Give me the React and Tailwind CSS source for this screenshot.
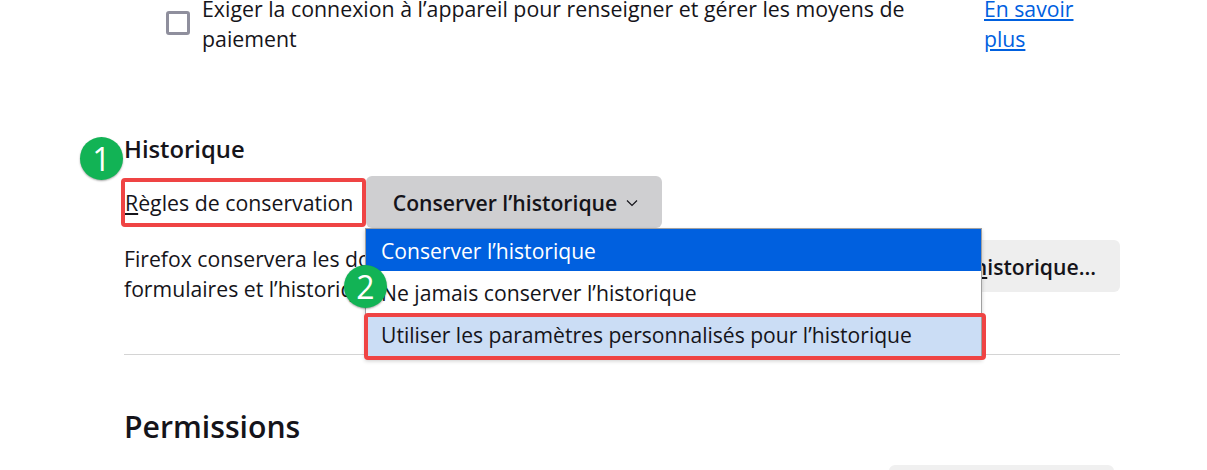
import React from 'react';

const font = "font-['Open_Sans','Noto_Sans',sans-serif]";

function Badge({ n, className }) {
    return (
        <div className={`absolute w-[43px] h-[43px] rounded-full bg-[#12b355] text-white flex items-center justify-center text-[32px] leading-none shadow-[0_1px_2px_rgba(0,0,0,0.35)] ${className}`}>
            {n}
        </div>
    );
}

export default function App() {
    return (
        <div className={`relative w-[1207px] h-[470px] overflow-hidden bg-white text-[#15141a] text-[21.2px] leading-[30px] ${font}`}>
            <div className="ml-[124px] w-[996px] -mt-[6px]">

                {/* PAIEMENT */}
                <div className="flex items-start h-[60px]">
                    <div className="ml-[42px] mt-[17px] w-[24px] h-[24px] shrink-0 rounded-[3px] border-[3px] border-[#8f8f9d]"></div>
                    <p className="ml-[12px] w-[740px] text-[21.33px]">
                        Exiger la connexion à l’appareil pour renseigner et gérer les moyens de paiement
                    </p>
                    <a className="ml-[42px] w-[120px] text-[#0060df] underline">En savoir plus</a>
                </div>

                {/* HISTORIQUE */}
                <h2 className="mt-[80px] text-[23.8px] leading-[30px] font-semibold">Historique</h2>

                <div className="mt-[12px] flex items-center h-[52px]">
                    <label className="w-[242px] pl-px pt-px text-[21.3px]"><span className="underline">R</span>ègles de conservation</label>
                    <button className="w-[296px] h-[52px] pt-px pl-1 rounded-md bg-[#cfcfd1] font-semibold flex items-center justify-center gap-2">
                        Conserver l’historique
                        <svg width="14" height="14" viewBox="0 0 14 14" fill="none" stroke="#15141a" strokeWidth="1.2">
                            <path d="M2 4.5 7 9.5 12 4.5" />
                        </svg>
                    </button>
                </div>

                <div className="mt-[12px] flex items-start">
                    <p className="flex-1 mt-[4px] overflow-hidden whitespace-nowrap">
                        Firefox conservera les données de navigation<br />
                        formulaires et l’historique de recherche
                    </p>
                    <button className="shrink-0 h-[52px] px-6 pt-px rounded-md bg-[#eeeeee] font-semibold">
                        Effacer l’<span className="underline">h</span>istorique…
                    </button>
                </div>

                <hr className="mt-[50px] border-[#d4d4d4]" />

                {/* PERMISSIONS */}
                <h1 className="mt-[51px] text-[30.2px] leading-[42px] font-semibold">Permissions</h1>

                <div className="mt-[17px] ml-[765px] w-[225px] h-[40px] rounded-md bg-[#f0f0f0]"></div>
            </div>

            {/* MENU OUVERT */}
            <div className="absolute left-[365px] top-[228px] w-[617px] h-[131px] bg-white border border-[#a0a0a0] shadow-[0_2px_4px_rgba(0,0,0,0.2)] text-[21.1px]">
                <div className="h-[42px] pl-[15px] pt-[2px] flex items-center bg-[#0060df] text-white">Conserver l’historique</div>
                <div className="h-[43px] pl-[15px] flex items-center text-[21.2px]">Ne jamais conserver l’historique</div>
                <div className="h-[43px] mt-px pl-[15px] pb-[4px] flex items-center bg-[#cbddf5]">Utiliser les paramètres personnalisés pour l’historique</div>
            </div>

            {/* ANNOTATIONS */}
            <div className="absolute left-[121px] top-[178px] w-[245px] h-[49px] rounded-[4px] border-[4px] border-[#ef4444]"></div>
            <div className="absolute left-[364px] top-[313px] w-[622px] h-[47px] rounded-[4px] border-[4px] border-[#ef4444]"></div>
            <Badge n="1" className="left-[80px] top-[137px]" />
            <Badge n="2" className="left-[344px] top-[265px]" />
        </div>
    );
}
